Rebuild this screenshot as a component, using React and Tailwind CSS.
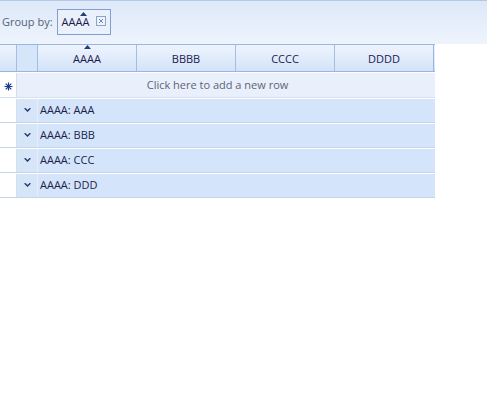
import React from "react";

const COLUMNS = ["AAAA", "BBBB", "CCCC", "DDDD"];
const GROUPS = ["AAA", "BBB", "CCC", "DDD"];

function SortArrow({ className }) {
  return (
    <svg width="7" height="4" viewBox="0 0 7 4" className={className}>
      <path d="M0 4 L3.5 0 L7 4 Z" fill="#1f3f77" />
    </svg>
  );
}

function Chevron() {
  return (
    <svg width="7" height="5" viewBox="0 0 7 5">
      <path d="M0 0.5 L3.5 4 L7 0.5 L5.5 0 L3.5 2 L1.5 0 Z" fill="#1f3b6e" />
    </svg>
  );
}

function CloseBox() {
  return (
    <svg width="10" height="10" viewBox="0 0 10 10">
      <rect x="0.5" y="0.5" width="9" height="9" fill="#eef3fc" stroke="#8aa4cc" />
      <path d="M3 3 L7 7 M7 3 L3 7" stroke="#6f89b6" strokeWidth="1" />
    </svg>
  );
}

function Star() {
  return (
    <svg width="9" height="9" viewBox="0 0 9 9">
      <path d="M4.5 0.5 V8.5 M0.5 4.5 H8.5 M1.7 1.7 L7.3 7.3 M7.3 1.7 L1.7 7.3" stroke="#1d3f8a" strokeWidth="1.2" />
    </svg>
  );
}

export default function App() {
  return (
    <div
      className="h-[409px] w-[487px] bg-white text-[11px]"
      style={{ fontFamily: '"Open Sans", "Noto Sans", sans-serif' }}
    >
      {/* group panel */}
      <div className="flex h-[44px] items-center border-t border-[#b3c7e6] bg-gradient-to-b from-[#dde8f8] to-[#eef4fd] pl-[2px]">
        <span className="text-[#55627a]">Group by:</span>
        <div className="relative ml-[4px] mt-[-1px] flex h-[26px] w-[54px] items-center border border-[#7f9fd0] bg-[#eaf1fc] pl-[4px]">
          <SortArrow className="absolute left-[22px] top-[2px]" />
          <span className="text-[#1b1b4e]">AAAA</span>
          <span className="ml-[7px] mt-[-3px] flex">
            <CloseBox />
          </span>
        </div>
      </div>

      <div className="w-[435px]">
        {/* header */}
        <div className="flex h-[28px] border-y border-[#9ab6df] bg-gradient-to-b from-[#eef4fd] to-[#d3e3f8]">
          <div className="w-[17px] border-r border-[#a6bde0]" />
          <div className="w-[21px] border-r border-[#a6bde0] bg-[#d6e6fa]" />
          {COLUMNS.map((c, i) => (
            <div
              key={c}
              className={`relative flex w-[99px] items-center justify-center pt-[2px] text-[#1b1b4e] ${
                i < 3 ? "border-r border-[#a6bde0]" : "border-r border-[#9ab6df]"
              }`}
            >
              {i === 0 && <SortArrow className="absolute left-[46px] top-[0px]" />}
              {c}
            </div>
          ))}
        </div>

        {/* new row */}
        <div className="mt-[1px] flex h-[25px] border-b border-[#d5e0ef]">
          <div className="flex w-[17px] items-center justify-center border-r border-[#d5dfee] pt-[2px]">
            <Star />
          </div>
          <div className="flex flex-1 items-center justify-center bg-[#e9f0fb] pr-[17px] text-[#5c6577]">
            Click here to add a new row
          </div>
        </div>

        {/* group rows */}
        {GROUPS.map((g) => (
          <div key={g} className="flex h-[25px] border-b border-[#c7d3e6] pt-[1px]">
            <div className="w-[17px] border-r border-[#d5dfee] bg-white" />
            <div className="flex flex-1 bg-[#d4e4fa]">
              <div className="flex w-[21px] items-center justify-center border-r border-[#e6eefb] bg-[#d7e5f9]">
                <Chevron />
              </div>
              <div className="flex items-center pl-[2px] text-[#1b1f4a]">AAAA: {g}</div>
            </div>
          </div>
        ))}
      </div>
    </div>
  );
}
